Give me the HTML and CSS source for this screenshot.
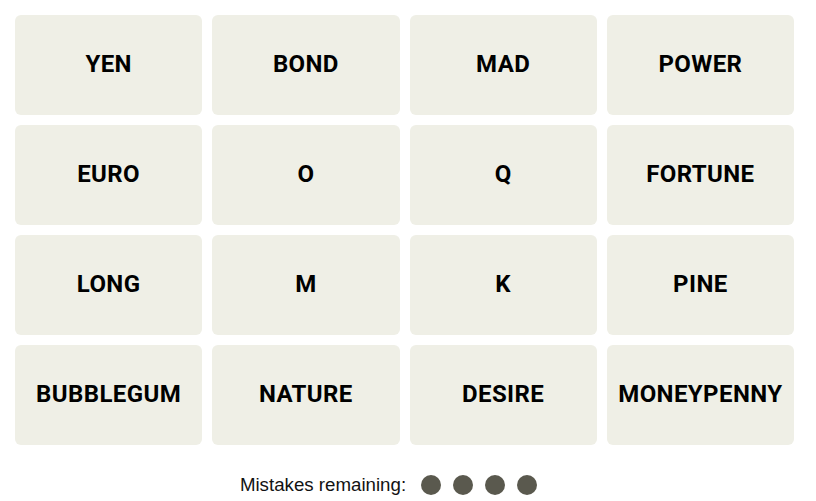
FILE: index.html
```html
<!DOCTYPE html>
<html>
<head>
<meta charset="utf-8">
<link rel="stylesheet" href="styles.css">
</head>
<body>
<div class="game">
  <div class="board">
    <div class="tile">YEN</div>
    <div class="tile">BOND</div>
    <div class="tile">MAD</div>
    <div class="tile">POWER</div>
    <div class="tile">EURO</div>
    <div class="tile">O</div>
    <div class="tile">Q</div>
    <div class="tile">FORTUNE</div>
    <div class="tile">LONG</div>
    <div class="tile">M</div>
    <div class="tile">K</div>
    <div class="tile">PINE</div>
    <div class="tile">BUBBLEGUM</div>
    <div class="tile">NATURE</div>
    <div class="tile">DESIRE</div>
    <div class="tile">MONEYPENNY</div>
  </div>
  <div class="mistakes">
    <span class="label">Mistakes remaining:</span>
    <span class="dots">
      <span class="dot"></span><span class="dot"></span><span class="dot"></span><span class="dot"></span>
    </span>
  </div>
</div>
</body>
</html>
```
FILE: styles.css
```css
html, body {
  margin: 0;
  padding: 0;
  background: #ffffff;
}
.game {
  padding: 15px 0 0 15px;
  width: 779px;
}
.board {
  display: grid;
  grid-template-columns: repeat(4, 1fr);
  grid-auto-rows: 100px;
  gap: 10px;
}
.tile {
  background: #efefe6;
  border-radius: 6px;
  display: flex;
  align-items: center;
  justify-content: center;
  padding-bottom: 2px;
  box-sizing: border-box;
  font-family: Roboto, "Liberation Sans", sans-serif;
  font-weight: 700;
  font-size: 24px;
  letter-spacing: 0.4px;
  color: #000;
}
.mistakes {
  display: flex;
  justify-content: center;
  align-items: center;
  margin-top: 29px;
  gap: 15px;
  padding-right: 32px;
}
.label {
  font-family: "Liberation Sans", Arial, sans-serif;
  font-size: 18.7px;
  color: #121212;
}
.dots {
  display: flex;
  gap: 12px;
}
.dot {
  width: 20px;
  height: 20px;
  border-radius: 50%;
  background: #5a594e;
}
```
